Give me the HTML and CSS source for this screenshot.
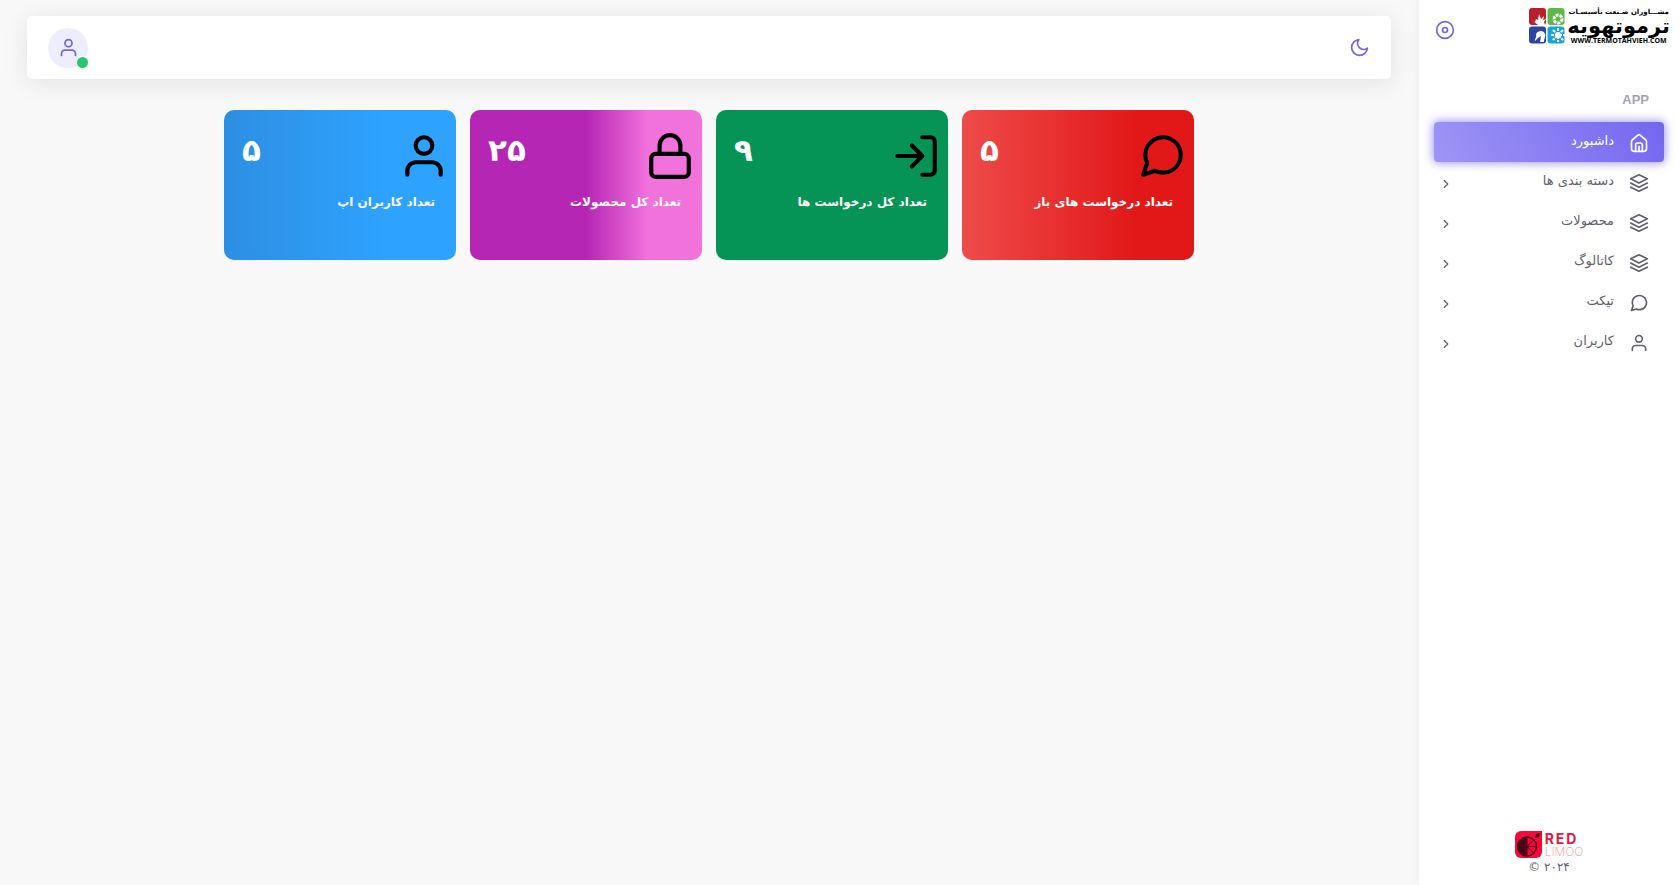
FILE: index.html
```html
<!DOCTYPE html>
<html lang="fa" dir="rtl">
  <head>
    <meta charset="UTF-8" />
    <meta name="viewport" content="width=device-width, initial-scale=1" />
    <title>داشبورد</title>
    <link rel="stylesheet" href="styles.css">
  </head>
  <body>
    <svg class="sprite" aria-hidden="true">
      <symbol id="home" viewBox="0 0 24 24"><path d="M3 10.500a3 3 0 0 1 1-2.200l6.300-5.500a2.600 2.600 0 0 1 3.400 0L20 8.300a3 3 0 0 1 1 2.200V19a3 3 0 0 1-3 3H6a3 3 0 0 1-3-3z"/><path d="M8 22v-8a2 2 0 0 1 2-2h4a2 2 0 0 1 2 2v8M12 16v6"/></symbol>
      <symbol id="layers" viewBox="0 0 24 24"><path d="M12 2 2 7l10 5 10-5z"/><path d="m2 17 10 5 10-5"/><path d="m2 12 10 5 10-5"/></symbol>
      <symbol id="message" viewBox="0 0 24 24"><path d="M21 11.500a8.380 8.380 0 0 1-.9 3.800 8.500 8.500 0 0 1-7.600 4.700 8.380 8.380 0 0 1-3.800-.9L3 21l1.900-5.700a8.380 8.380 0 0 1-.9-3.800 8.500 8.500 0 0 1 4.700-7.600 8.380 8.380 0 0 1 3.800-.9h.5a8.480 8.480 0 0 1 8 8z"/></symbol>
      <symbol id="user" viewBox="0 0 24 24"><path d="M20 21v-2a4 4 0 0 0-4-4H8a4 4 0 0 0-4 4v2"/><circle cx="12" cy="7" r="4"/></symbol>
      <symbol id="login" viewBox="0 0 24 24"><path d="M15 3h4a2 2 0 0 1 2 2v14a2 2 0 0 1-2 2h-4"/><path d="m10 17 5-5-5-5"/><path d="M15 12H3"/></symbol>
      <symbol id="lock" viewBox="0 0 24 24"><rect x="3" y="11" width="18" height="11" rx="2"/><path d="M7 11V7a5 5 0 0 1 10 0v4"/></symbol>
      <symbol id="moon" viewBox="0 0 24 24"><path d="M21 12.790A9 9 0 1 1 11.210 3 7 7 0 0 0 21 12.790z"/></symbol>
      <symbol id="disc" viewBox="0 0 24 24"><circle cx="12" cy="12" r="10"/><circle cx="12" cy="12" r="3"/></symbol>
      <symbol id="chevron" viewBox="0 0 24 24"><path d="m9 18 6-6-6-6"/></symbol>
    </svg>

    <aside class="sidebar">
      <div class="brand">
        <a href="#" class="brand-logo">
          <svg class="brand-mark" viewBox="0 0 36 36" aria-hidden="true">
            <rect width="17" height="17" rx="3" fill="#b9202c"/>
            <rect x="18.500" width="17" height="17" rx="3" fill="#5cb848"/>
            <rect y="18.500" width="17" height="17" rx="3" fill="#2c459f"/>
            <rect x="18.500" y="18.500" width="17" height="17" rx="3" fill="#1ba3d6"/>
            <path fill="#fff" d="M4 13l2 1 1-3 2 1 1-6 2 5 3-3-1 4 3-1-2 3 1 3H9z"/>
            <circle cx="29" cy="11" r="4" fill="none" stroke="#fff" stroke-width="3" stroke-dasharray="3 1"/>
            <path fill="#fff" d="M7 26c2-4 8-4 9 0 1 3-1 4-1 8h-4l1-6-3 2-3 3c-1-2 2-3 1-7z"/>
            <path stroke="#fff" stroke-width="2" stroke-dasharray="3 1" d="M29 20v14M22 27h14M24 22l10 10M34 22 24 32"/>
          </svg>
          <span class="brand-text">
            <span class="brand-top">مشـــاوران صـنعت تأسیسـات</span>
            <span class="brand-name">ترموتهویه</span>
            <span class="brand-url" dir="ltr">WWW.TERMOTAHVIEH.COM</span>
          </span>
        </a>
        <button type="button" class="icon-button" aria-label="منو"><svg class="icon"><use href="#disc"/></svg></button>
      </div>

      <nav class="menu">
        <h2 class="menu-title">APP</h2>
        <a href="#" class="menu-item active"><svg class="icon"><use href="#home"/></svg><span>داشبورد</span></a>
        <a href="#" class="menu-item"><svg class="icon"><use href="#layers"/></svg><span>دسته بندی ها</span><svg class="chevron"><use href="#chevron"/></svg></a>
        <a href="#" class="menu-item"><svg class="icon"><use href="#layers"/></svg><span>محصولات</span><svg class="chevron"><use href="#chevron"/></svg></a>
        <a href="#" class="menu-item"><svg class="icon"><use href="#layers"/></svg><span>کاتالوگ</span><svg class="chevron"><use href="#chevron"/></svg></a>
        <a href="#" class="menu-item"><svg class="icon"><use href="#message"/></svg><span>تیکت</span><svg class="chevron"><use href="#chevron"/></svg></a>
        <a href="#" class="menu-item"><svg class="icon"><use href="#user"/></svg><span>کاربران</span><svg class="chevron"><use href="#chevron"/></svg></a>
      </nav>

      <footer class="footer">
        <a href="#" class="limoo" dir="ltr">
          <svg class="limoo-mark" viewBox="0 0 27 27" aria-hidden="true">
            <path fill="#f5093b" d="M6 0h21v21a6 6 0 0 1-6 6H6a6 6 0 0 1-6-6V6a6 6 0 0 1 6-6z"/>
            <circle cx="12" cy="15.500" r="9.500" fill="#f5093b" stroke="#4a0516" stroke-width="1.500"/>
            <path fill="#4a0516" d="M12 6a9.500 9.500 0 0 0 0 19z"/>
            <path fill="none" stroke="#4a0516" d="M12 6v19M12 15.500h9M12 15.500l6.500-6.500M12 15.500l6.500 6.500"/>
            <path fill="#4a0516" d="M20 7c0-3 2-5 5-5 0 3-2 5-5 5z"/>
          </svg>
          <span class="limoo-text"><b>RED</b><span>LIMOO</span></span>
        </a>
        <p dir="ltr">© ۲۰۲۴</p>
      </footer>
    </aside>

    <main class="content">
      <header class="navbar">
        <button type="button" class="icon-button" aria-label="حالت شب"><svg class="icon"><use href="#moon"/></svg></button>
        <button type="button" class="avatar" aria-label="حساب کاربری"><svg class="icon"><use href="#user"/></svg><span class="status"></span></button>
      </header>

      <section class="cards">
        <article class="card red">
          <div class="card-top"><svg class="card-icon"><use href="#message"/></svg><strong>۵</strong></div>
          <p>تعداد درخواست های باز</p>
        </article>
        <article class="card green">
          <div class="card-top"><svg class="card-icon"><use href="#login"/></svg><strong>۹</strong></div>
          <p>تعداد کل درخواست ها</p>
        </article>
        <article class="card purple">
          <div class="card-top"><svg class="card-icon"><use href="#lock"/></svg><strong>۲۵</strong></div>
          <p>تعداد کل محصولات</p>
        </article>
        <article class="card blue">
          <div class="card-top"><svg class="card-icon"><use href="#user"/></svg><strong>۵</strong></div>
          <p>تعداد کاربران اپ</p>
        </article>
      </section>
    </main>
  </body>
</html>
```

FILE: styles.css
```css
* {
  box-sizing: border-box;
  margin: 0;
  padding: 0;
}
body {
  font-family: "DejaVu Sans", sans-serif;
  font-size: 13px;
  background: #f8f8f8;
  color: #625f6e;
  display: flex;
  min-height: 100vh;
}
a {
  color: inherit;
  text-decoration: none;
}
button {
  border: none;
  background: none;
  color: #7367d8;
  cursor: pointer;
}
svg {
  display: block;
}
.sprite {
  position: absolute;
  width: 0;
  height: 0;
}
.icon,
.chevron,
.card-icon {
  flex: none;
  fill: none;
  stroke: currentColor;
  stroke-width: 2;
  stroke-linecap: round;
  stroke-linejoin: round;
}
.icon {
  width: 20px;
  height: 20px;
}
.chevron {
  width: 14px;
  height: 14px;
  margin: 2px auto 0 0;
}

/* sidebar */
.sidebar {
  width: 260px;
  flex: none;
  display: flex;
  flex-direction: column;
  background: #fff;
  box-shadow: 0 0 15px rgba(34, 41, 47, 0.05);
}
.brand {
  display: flex;
  justify-content: space-between;
  align-items: flex-start;
  height: 45px;
  padding: 8px 9px 0 16px;
}
.brand .icon-button {
  padding-top: 12px;
}
.brand-logo {
  display: flex;
  gap: 2px;
  color: #000;
}
.brand-mark {
  width: 36px;
  height: 36px;
  order: 1;
}
.brand-text {
  display: flex;
  flex-direction: column;
  align-items: center;
  white-space: nowrap;
  font-weight: bold;
}
.brand-top {
  font-size: 7px;
  line-height: 8px;
}
.brand-name {
  font-size: 21px;
  line-height: 20px;
}
.brand-url {
  font-family: "Open Sans", sans-serif;
  font-size: 7px;
  line-height: 10px;
}
.menu {
  padding: 45px 15px 0;
}
.menu-title {
  font-family: "Liberation Sans", sans-serif;
  font-size: 13px;
  font-weight: bold;
  line-height: 20px;
  padding: 0 15px;
  margin-bottom: 12px;
  color: #a6a4b0;
}
.menu-item {
  display: flex;
  align-items: center;
  height: 40px;
  padding: 2px 15px 0 5px;
  border-radius: 4px;
}
.menu-item span {
  margin-right: 15px;
  padding-bottom: 5px;
}
.menu-item.active {
  color: #fff;
  background: linear-gradient(-118deg, #7367f0, #9e95f5);
  box-shadow: 0 0 10px 1px rgba(115, 103, 240, 0.7);
}
.footer {
  margin-top: auto;
  display: flex;
  flex-direction: column;
  align-items: center;
  padding-bottom: 9px;
  font-size: 12px;
  line-height: 18px;
}
.limoo {
  display: flex;
  gap: 3px;
}
.limoo-mark {
  width: 27px;
  height: 27px;
}
.limoo-text {
  display: flex;
  flex-direction: column;
  font-family: Inter, sans-serif;
  font-size: 12px;
  line-height: 12px;
  font-weight: 200;
  color: #f08a8a;
}
.limoo-text b {
  font-size: 14px;
  font-weight: 700;
  line-height: 15px;
  letter-spacing: 2px;
  color: #e5163f;
}

/* content */
.content {
  flex: 1;
  padding: 16px 28px 0 27px;
}
.navbar {
  display: flex;
  align-items: center;
  justify-content: space-between;
  height: 63px;
  padding: 0 21px;
  background: #fff;
  border-radius: 5px;
  box-shadow: 0 4px 24px rgba(34, 41, 47, 0.1);
}
.navbar .icon {
  width: 21px;
  height: 21px;
}
.avatar {
  position: relative;
  display: flex;
  align-items: center;
  justify-content: center;
  width: 40px;
  height: 40px;
  border-radius: 50%;
  background: #eeedfd;
}
.status {
  position: absolute;
  right: 0;
  bottom: 0;
  width: 11px;
  height: 11px;
  border-radius: 50%;
  background: #28c76f;
  box-shadow: 0 0 0 1px #fff;
}
.cards {
  display: flex;
  flex-wrap: wrap;
  justify-content: center;
  gap: 14px;
  margin-top: 31px;
}
.card {
  width: 232px;
  height: 150px;
  padding: 21px 7px 0 18px;
  border-radius: 10px;
  color: #fff;
}
.card-top {
  display: flex;
  justify-content: space-between;
}
.card-icon {
  width: 50px;
  height: 50px;
  color: #000;
}
.card strong {
  font-size: 31px;
  line-height: 38px;
}
.card p {
  padding-right: 14px;
  margin-top: 11px;
  font-size: 12px;
  font-weight: bold;
  line-height: 20px;
}
.red {
  background: linear-gradient(90deg, #ef4b4b, #e21818 75%);
}
.green {
  background: #059455;
}
.purple {
  background: linear-gradient(90deg, #b526b5 50%, #f272dc 77%);
}
.blue {
  background: linear-gradient(90deg, #2d8fe2, #2da2ff 70%);
}
```
